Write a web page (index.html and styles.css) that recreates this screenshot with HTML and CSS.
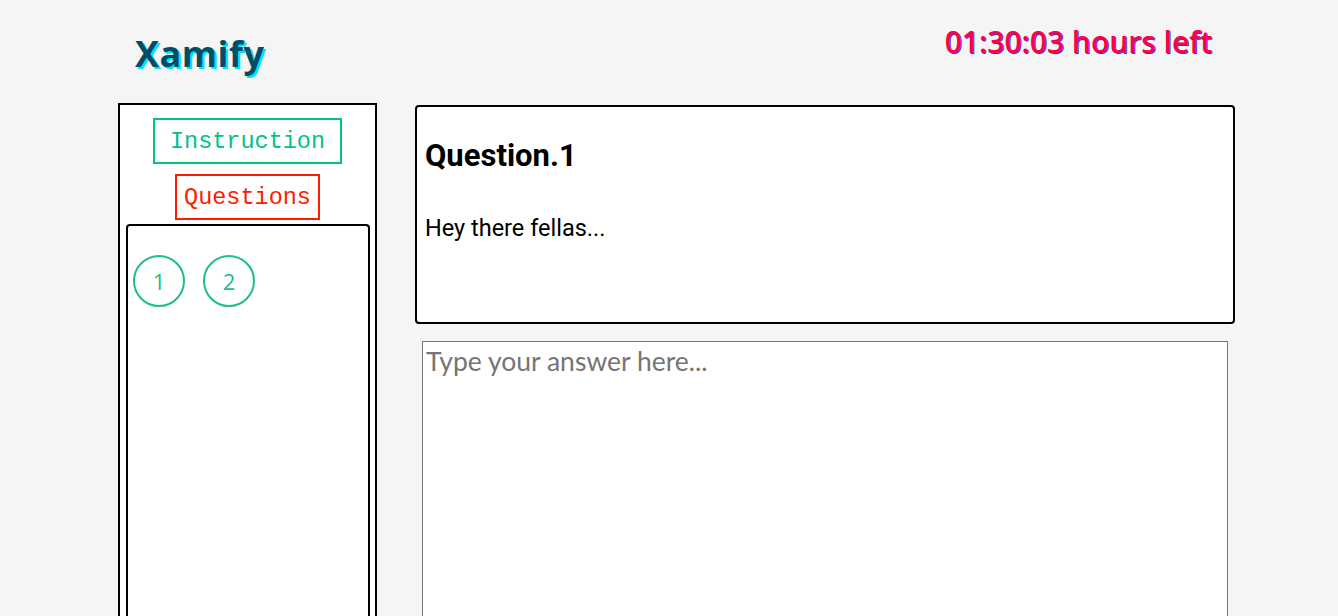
FILE: index.html
```html
<!DOCTYPE html>
<html>
<head>
<meta charset="utf-8">
<title>Xamify</title>
<link rel="stylesheet" href="styles.css">
</head>
<body>
<header class="header">
  <div class="logo">Xamify</div>
  <div class="timer">01:30:03 hours left</div>
</header>
<main class="main">
  <aside class="sidebar">
    <div class="tab tab-instr">Instruction</div>
    <div class="tab tab-questions">Questions</div>
    <div class="qlist">
      <div class="qnum">1</div>
      <div class="qnum">2</div>
    </div>
  </aside>
  <section class="content">
    <div class="question">
      <h2 class="qtitle">Question.1</h2>
      <p class="qtext">Hey there fellas...</p>
    </div>
    <textarea class="answer" placeholder="Type your answer here..."></textarea>
  </section>
</main>
</body>
</html>
```
FILE: styles.css
```css
html, body {
  margin: 0;
  padding: 0;
  background: #f5f5f5;
  overflow: hidden;
}
body {
  font-family: "Open Sans", "DejaVu Sans", sans-serif;
}
.header {
  display: flex;
  justify-content: space-between;
  align-items: flex-start;
  height: 103px;
  box-sizing: border-box;
  padding: 0 126px 0 135px;
}
.logo {
  font-family: "Open Sans", sans-serif;
  font-weight: 700;
  font-size: 36px;
  line-height: 1;
  margin-top: 36px;
  color: #004d66;
  text-shadow: 2px 2px 0 #00e5ff;
  letter-spacing: 0.5px;
}
.timer {
  font-family: "Open Sans", sans-serif;
  font-weight: 600;
  font-size: 30px;
  line-height: 1;
  margin-top: 27px;
  color: #ff0040;
  text-shadow: 1px 1px 0 #3333ff;
}
.main {
  display: flex;
  align-items: flex-start;
  padding-left: 118px;
  gap: 38px;
}
.sidebar {
  width: 259px;
  height: 560px;
  box-sizing: border-box;
  border: 2px solid #000;
  background: #fff;
  display: flex;
  flex-direction: column;
  align-items: center;
  padding-top: 13px;
}
.tab {
  font-family: "Liberation Mono", monospace;
  font-size: 23.5px;
  height: 46px;
  box-sizing: border-box;
  line-height: 40px;
  padding-top: 2px;
  border: 2px solid;
  background: #fff;
}
.tab-instr {
  color: #00c28a;
  border-color: #00c28a;
  padding-left: 15px;
  padding-right: 15px;
}
.tab-questions {
  color: #ff1a00;
  border-color: #ff1a00;
  padding-left: 7px;
  padding-right: 7px;
  margin-top: 10px;
}
.qlist {
  align-self: stretch;
  margin: 4px 5px 0 6px;
  flex: 1;
  border: 2px solid #000;
  border-radius: 4px;
  border-bottom: none;
  display: flex;
  align-items: flex-start;
  gap: 18px;
  padding: 29px 5px 0;
}
.qnum {
  width: 52px;
  height: 52px;
  box-sizing: border-box;
  border: 2px solid #1dbf88;
  border-radius: 50%;
  display: flex;
  align-items: center;
  justify-content: center;
  color: #1dbf88;
  font-family: "Open Sans", sans-serif;
  font-size: 22px;
}
.content {
  display: flex;
  flex-direction: column;
  margin-top: 2px;
}
.question {
  width: 820px;
  height: 219px;
  box-sizing: border-box;
  border: 2px solid #000;
  border-radius: 4px;
  background: #fff;
  padding: 0 8px;
  font-family: Roboto, sans-serif;
}
.qtitle {
  margin: 31px 0 0;
  font-size: 31px;
  font-weight: 700;
  line-height: 36px;
  color: #000;
}
.qtext {
  margin: 40px 0 0;
  font-size: 23.5px;
  line-height: 28px;
  color: #000;
}
.answer {
  margin: 17px 0 0 7px;
  width: 806px;
  height: 300px;
  box-sizing: border-box;
  border: 1px solid #767676;
  background: #fff;
  resize: none;
  padding: 3px 3px;
  font-family: Lato, sans-serif;
  font-size: 26.5px;
  color: #000;
}
.answer::placeholder {
  color: #757575;
}
```
